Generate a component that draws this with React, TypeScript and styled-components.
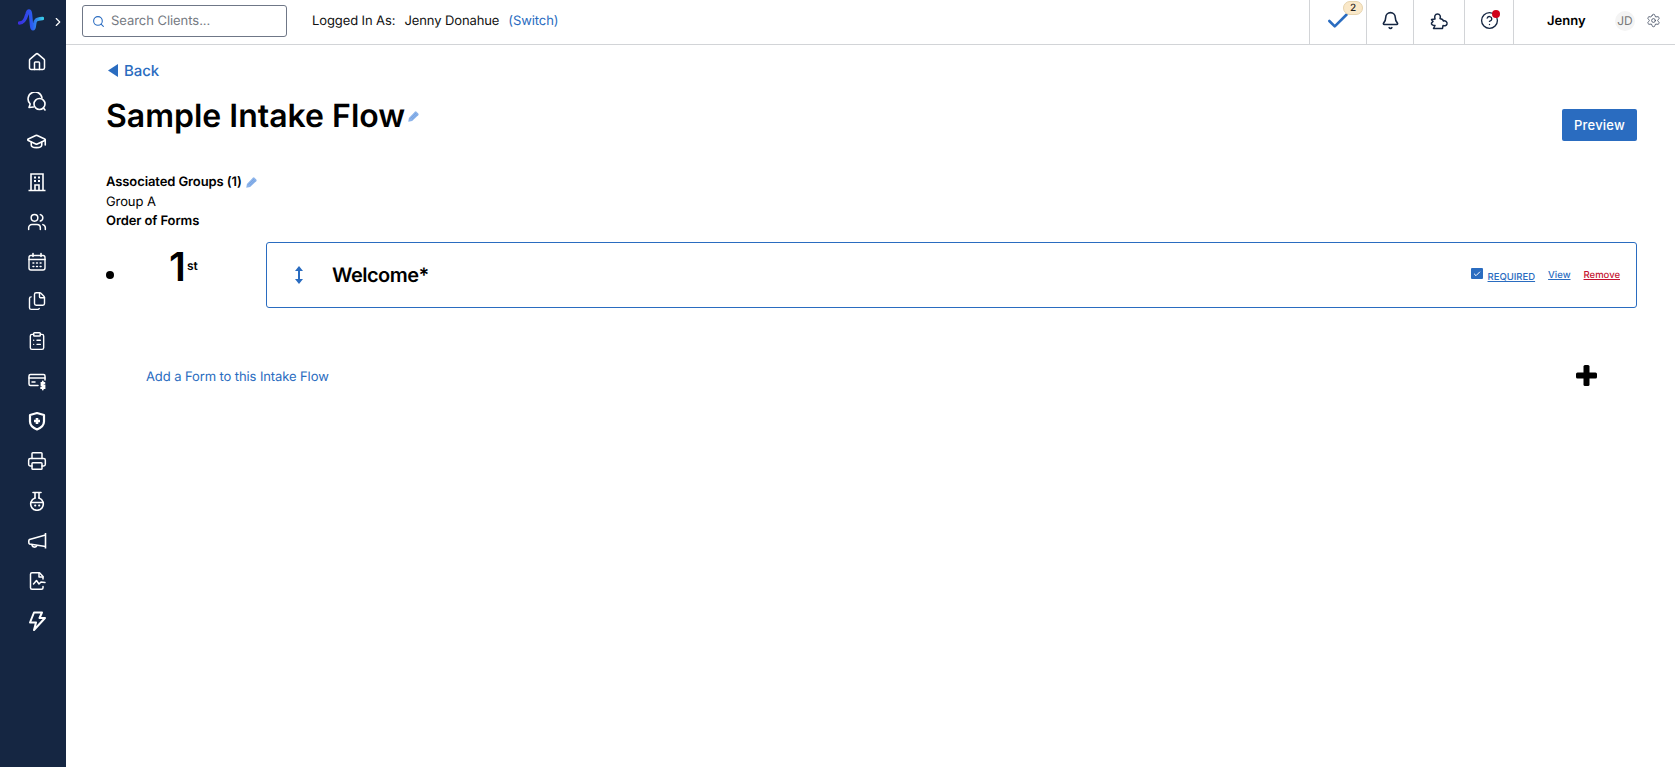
import React from 'react';
import styled, { createGlobalStyle } from 'styled-components';
import { Bell, Check, ChevronRight, CircleHelp, Files, GraduationCap, House, Printer, Search, Settings, Users, ClipboardList } from 'lucide-react';

const GlobalStyle = createGlobalStyle`
    html, body {
        margin: 0;
        padding: 0;
        background: #fff;
        font-family: Inter, "Liberation Sans", sans-serif;
        color: #000;
        text-rendering: geometricPrecision;
        -webkit-font-smoothing: antialiased;
    }
`;

const Page = styled.div`
    display: flex;
    width: 100%;
    height: 767px;
    overflow: hidden;
`;

const Sidebar = styled.nav`
    width: 66px;
    flex: none;
    background: #152642;
    display: flex;
    flex-direction: column;
    align-items: center;
`;

const LogoRow = styled.div`
    height: 44px;
    width: 100%;
    position: relative;
    flex: none;
    display: flex;
    align-items: center;
    padding: 0 0 4px 18px;
    box-sizing: border-box;
`;

const Expand = styled.span`
    position: absolute;
    left: 51px;
    top: 15px;
    color: #fff;
    display: flex;
`;

const NavList = styled.div`
    display: flex;
    flex-direction: column;
    margin-top: -2px;
`;

const NavItem = styled.div`
    width: 66px;
    height: 39.93px;
    box-sizing: border-box;
    padding-left: 7px;
    display: flex;
    align-items: center;
    justify-content: center;
    color: #fff;
`;

const Main = styled.div`
    flex: 1;
    min-width: 0;
    display: flex;
    flex-direction: column;
`;

const TopBar = styled.header`
    height: 45px;
    box-sizing: border-box;
    flex: none;
    border-bottom: 1px solid #d2d4d7;
    display: flex;
    align-items: center;
    padding-left: 16px;
`;

const SearchBox = styled.div`
    width: 205px;
    height: 32px;
    margin-top: -2px;
    box-sizing: border-box;
    border: 1px solid #6f7787;
    border-radius: 3px;
    display: flex;
    align-items: center;
    gap: 6px;
    padding-left: 9px;
    font-size: 13px;
    color: #757a82;
    letter-spacing: -0.05px;
`;

const Logged = styled.div`
    margin-left: 25px;
    margin-top: -2px;
    font-size: 13px;
    letter-spacing: -0.1px;
    display: flex;
    color: #111;
`;

const LoggedName = styled.span`
    margin-left: 9px;
`;

const SwitchLink = styled.span`
    margin-left: 9px;
    color: #2a6cc0;
`;

const TopRight = styled.div`
    margin-left: auto;
    display: flex;
    height: 100%;
`;

const TopCell = styled.div<{ $w: number }>`
    width: ${(p) => p.$w}px;
    height: 100%;
    box-sizing: border-box;
    border-left: 1px solid #d2d4d7;
    padding-bottom: 3px;
    display: flex;
    align-items: center;
    justify-content: center;
    position: relative;
    color: #152642;
`;

const CountBadge = styled.span`
    position: absolute;
    top: 1px;
    left: 33px;
    width: 20px;
    height: 14px;
    border-radius: 7px;
    background: #fae8c8;
    border: 1px solid #e6d3ae;
    box-sizing: border-box;
    font-size: 10px;
    font-weight: 500;
    line-height: 12px;
    text-align: center;
    color: #222;
`;

const RedDot = styled.span`
    position: absolute;
    top: 10px;
    left: 27px;
    width: 8px;
    height: 8px;
    border-radius: 50%;
    background: #d0021b;
`;

const UserCell = styled.div`
    width: 162px;
    height: 100%;
    box-sizing: border-box;
    border-left: 1px solid #d2d4d7;
    padding-bottom: 3px;
    display: flex;
    align-items: center;
    padding-left: 33px;
    color: #4a5568;
`;

const UserName = styled.span`
    font-size: 13px;
    font-weight: 600;
    color: #000;
    width: 68px;
`;

const Avatar = styled.span`
    width: 20px;
    height: 20px;
    border-radius: 50%;
    background: #f4f4f4;
    color: #777;
    font-size: 12px;
    display: flex;
    align-items: center;
    justify-content: center;
    margin-right: 11px;
`;

const Content = styled.main`
    padding: 0 38px 0 40px;
    display: flex;
    flex-direction: column;
`;

const BackLink = styled.div`
    margin: 16px 0 0 2px;
    height: 19px;
    display: flex;
    align-items: center;
    gap: 6px;
    color: #2a6cc0;
    font-size: 15px;
    font-weight: 500;
    letter-spacing: -0.1px;
`;

const TitleRow = styled.div`
    margin-top: 14px;
    display: flex;
    justify-content: space-between;
    align-items: flex-start;
`;

const Title = styled.h1`
    margin: 0;
    font-size: 32px;
    line-height: 44px;
    font-weight: 600;
    display: flex;
    align-items: center;
    gap: 3px;
`;

const PreviewButton = styled.button`
    margin-top: 15px;
    width: 75px;
    height: 32px;
    border: none;
    border-radius: 2px;
    background: #2a6cc0;
    color: #fff;
    font-family: inherit;
    font-size: 13px;
    font-weight: 500;
    letter-spacing: 0.2px;
`;

const Meta = styled.div`
    margin-top: 32px;
    font-size: 13px;
    line-height: 19.5px;
    letter-spacing: -0.1px;
`;

const MetaHead = styled.div`
    font-weight: 600;
    display: flex;
    align-items: center;
    gap: 4px;
`;

const FlowRow = styled.div`
    margin-top: 10px;
    display: flex;
    align-items: stretch;
`;

const Bullet = styled.span`
    width: 8px;
    height: 8px;
    border-radius: 50%;
    background: #000;
    margin-top: 29px;
    flex: none;
`;

const Ordinal = styled.div`
    width: 152px;
    flex: none;
    padding: 2px 0 0 55px;
    box-sizing: border-box;
    display: flex;
    align-items: flex-start;
    font-weight: 600;
`;

const OrdinalNumber = styled.span`
    font-size: 40px;
    line-height: 46px;
`;

const OrdinalSuffix = styled.span`
    font-size: 12px;
    line-height: 14px;
    margin-top: 15px;
    margin-left: 1px;
`;

const FormCard = styled.div`
    flex: 1;
    height: 66px;
    box-sizing: border-box;
    border: 1px solid #2a6cc0;
    border-radius: 3px;
    display: flex;
    align-items: center;
    padding: 0 16px 0 27px;
`;

const DragIcon = styled.span`
    color: #2a6cc0;
    display: flex;
    width: 38px;
`;

const FormName = styled.span`
    font-size: 20px;
    font-weight: 600;
    letter-spacing: -0.5px;
`;

const Actions = styled.div`
    margin-left: auto;
    display: flex;
    align-items: center;
    gap: 13px;
`;

const RequiredWrap = styled.label`
    display: flex;
    align-items: flex-start;
    gap: 5px;
`;

const CheckBox = styled.span`
    width: 12px;
    height: 11px;
    margin-top: -1px;
    border-radius: 1px;
    background: #2a6cc0;
    color: #fff;
    display: flex;
    align-items: center;
    justify-content: center;
`;

const ActionLink = styled.span<{ $danger?: boolean; $drop?: boolean }>`
    font-size: 9.5px;
    font-weight: 500;
    text-decoration: underline;
    color: ${(p) => (p.$danger ? '#c4122f' : '#2a6cc0')};
    position: relative;
    top: ${(p) => (p.$drop ? '3px' : '1px')};
`;

const AddRow = styled.div`
    margin-top: 61px;
    padding: 0 40px 0 40px;
    display: flex;
    align-items: center;
    justify-content: space-between;
`;

const AddLink = styled.span`
    font-size: 13px;
    letter-spacing: -0.1px;
    color: #2a6cc0;
`;

const PlusWrap = styled.span`
    display: flex;
    margin-top: -4px;
`;

const Logo = () => (
    <svg width="26" height="22" viewBox="0 0 26 22" fill="none">
        <defs>
            <linearGradient id="logoGrad" x1="0" x2="1" y1="0" y2="0">
                <stop offset="0" stopColor="#3b2fe0" />
                <stop offset="0.55" stopColor="#2b5cf0" />
                <stop offset="1" stopColor="#38c8e8" />
            </linearGradient>
        </defs>
        <path d="M1.5 14 C5 14 7 12 9 5 C10 1 12 1 12.5 5 L13.5 16 C14 21 16 21 16.5 16 C17 11 18 10 24.5 9.5" stroke="url(#logoGrad)" strokeWidth="3.4" strokeLinecap="round" />
    </svg>
);

const Chats = () => (
    <svg width="20" height="20" viewBox="0 0 20 20" fill="none" stroke="currentColor" strokeWidth="1.6" strokeLinecap="round" strokeLinejoin="round">
        <path d="M6.5 15 L2 15.5 L3.2 12 A7 7 0 1 1 15 6" />
        <circle cx="12.5" cy="12" r="5.5" />
        <path d="M16.5 16 L18 18" />
    </svg>
);

const BuildingIcon = () => (
    <svg width="20" height="20" viewBox="0 0 20 20" fill="none" stroke="currentColor" strokeWidth="1.6">
        <path d="M4 18.5 V2 H16 V18.5 M1.5 18.5 H18.5" />
        <path d="M7 5.5 H9 M11 5.5 H13 M7 9 H9 M11 9 H13" strokeWidth="2" />
        <path d="M8 18.5 V13 H12 V18.5" />
    </svg>
);

const CalendarGrid = () => (
    <svg width="20" height="20" viewBox="0 0 20 20" fill="none" stroke="currentColor" strokeWidth="1.4" strokeLinecap="round">
        <rect x="2" y="3.5" width="16" height="14.5" rx="2" />
        <path d="M2 7.5 H18 M6 1.5 V4.5 M14 1.5 V4.5" strokeWidth="1.6" />
        <path d="M6 11 H6.8 M9.6 11 H10.4 M13.2 11 H14 M6 14.5 H6.8 M9.6 14.5 H10.4 M13.2 14.5 H14" strokeWidth="1.6" />
    </svg>
);

const CardDollar = () => (
    <svg width="20" height="20" viewBox="0 0 20 20" fill="none" stroke="currentColor" strokeWidth="1.5" strokeLinecap="round">
        <path d="M11 14.5 H3.5 A1.5 1.5 0 0 1 2 13 V5 A1.5 1.5 0 0 1 3.5 3.5 H16.5 A1.5 1.5 0 0 1 18 5 V9" />
        <path d="M2 7 H18 M5 11 H8" />
        <path d="M17.5 12 H14.5 V14.5 H17.5 V17 H14 M15.8 10.5 V18.5" strokeWidth="1.8" />
    </svg>
);

const ShieldPlus = () => (
    <svg width="20" height="20" viewBox="0 0 20 20" fill="none" stroke="currentColor" strokeWidth="2.2" strokeLinejoin="round">
        <path d="M10 2 L17 4 V10.5 C17 14.5 13.5 17 10 18.5 C6.5 17 3 14.5 3 10.5 V4 Z" />
        <path d="M10 7 V13 M7 10 H13" strokeWidth="2.6" />
    </svg>
);

const Flask = () => (
    <svg width="20" height="20" viewBox="0 0 20 20" fill="none" stroke="currentColor" strokeWidth="1.6" strokeLinecap="round">
        <path d="M6 1.5 H14 M8 1.5 V7 M12 1.5 V7" />
        <path d="M8 7 A6.3 6.3 0 1 0 12 7" />
        <path d="M3.8 11.5 H16.2" />
        <path d="M8 14.5 H8.4 M12 14.5 H12.4" strokeWidth="1.8" />
    </svg>
);

const Horn = () => (
    <svg width="20" height="20" viewBox="0 0 20 20" fill="none" stroke="currentColor" strokeWidth="1.6" strokeLinejoin="round">
        <path d="M18.5 2 V17.5" />
        <path d="M18.5 4 L2.5 8.5 C1.5 9 1.5 12.5 2.5 13 L18.5 15.5" />
        <path d="M5 13.5 C5 16.5 9 17 10 14.5" />
    </svg>
);

const ReportChart = () => (
    <svg width="20" height="20" viewBox="0 0 20 20" fill="none" stroke="currentColor" strokeWidth="1.5" strokeLinecap="round" strokeLinejoin="round">
        <path d="M16 8 V5.5 L12.5 1.8 H5 A1.5 1.5 0 0 0 3.5 3.3 V16.7 A1.5 1.5 0 0 0 5 18.2 H14.5 A1.5 1.5 0 0 0 16 16.7 V15.5" />
        <path d="M12 2 V6 H16" />
        <path d="M6.5 13 L9.5 9.5 L12 13 L14 11 L18 11.5" />
    </svg>
);

const Bolt = () => (
    <svg width="20" height="20" viewBox="0 0 20 20" fill="none" stroke="currentColor" strokeWidth="2" strokeLinejoin="round">
        <path d="M7 1.5 H15 L12.5 7 H18 L7 19 L9 11.5 H3 Z" />
    </svg>
);

const PuzzleIcon = () => (
    <svg width="20" height="20" viewBox="0 0 20 20" fill="none" stroke="currentColor" strokeWidth="1.5" strokeLinejoin="round">
        <path d="M2.5 8.5 L6 8 C5.2 5.5 6 3 8.5 3 C11 3 12 5.5 11 7.5 L13.5 8.5 L14.5 10 C16 9.5 18.5 10.5 18 13 C17.5 15 15 15 14 14.5 L13.5 17.5 H4.5 L6 14.5 C4 14.5 2 13.5 2.5 12 L4 10.5 Z" />
    </svg>
);

const TriangleLeft = () => (
    <svg width="10" height="13" viewBox="0 0 10 13">
        <path d="M10 0 V13 L0 6.5 Z" fill="#2a6cc0" />
    </svg>
);

const UpDown = () => (
    <svg width="10" height="18" viewBox="0 0 10 18" fill="currentColor">
        <path d="M5 0 L9 5 H1 Z M5 18 L1 13 H9 Z" />
        <rect x="4" y="4" width="2" height="10" />
    </svg>
);

const EditPencil = ({ size }: { size: number }) => (
    <svg width={size} height={size} viewBox="0 0 12 12">
        <path d="M0.3 11.7 L1 7.5 L7.5 0.8 A1.3 1.3 0 0 1 9.3 0.8 L11.2 2.7 A1.3 1.3 0 0 1 11.2 4.5 L4.5 11 Z" fill="#8db4ea" />
        <path d="M2.8 8.2 L8.8 2.2 M4.3 9.2 L10.2 3.4" stroke="#5f93dd" strokeWidth="0.6" />
    </svg>
);

const ThickPlus = () => (
    <svg width="21" height="21" viewBox="0 0 21 21" fill="#000">
        <rect x="7.5" y="0" width="6" height="21" rx="1.5" />
        <rect x="0" y="7.5" width="21" height="6" rx="1.5" />
    </svg>
);

const navIcons = [
    <House key="home" size={20} strokeWidth={1.8} />,
    <Chats key="chats" />,
    <GraduationCap key="school" size={21} strokeWidth={1.8} />,
    <BuildingIcon key="building" />,
    <Users key="users" size={20} strokeWidth={1.8} />,
    <CalendarGrid key="calendar" />,
    <Files key="files" size={20} strokeWidth={1.7} />,
    <ClipboardList key="clipboard" size={20} strokeWidth={1.7} />,
    <CardDollar key="billing" />,
    <ShieldPlus key="shield" />,
    <Printer key="printer" size={20} strokeWidth={1.8} />,
    <Flask key="lab" />,
    <Horn key="marketing" />,
    <ReportChart key="reports" />,
    <Bolt key="zap" />,
];

const App = () => (
    <>
        <GlobalStyle />
        <Page>
            <Sidebar>
                <LogoRow>
                    <Logo />
                    <Expand><ChevronRight size={14} strokeWidth={2} /></Expand>
                </LogoRow>
                <NavList>
                    {navIcons.map((icon) => (
                        <NavItem key={icon.key}>{icon}</NavItem>
                    ))}
                </NavList>
            </Sidebar>
            <Main>
                <TopBar>
                    <SearchBox>
                        <Search size={13} color="#2a6cc0" strokeWidth={2} />
                        Search Clients...
                    </SearchBox>
                    <Logged>
                        Logged In As:
                        <LoggedName>Jenny Donahue</LoggedName>
                        <SwitchLink>(Switch)</SwitchLink>
                    </Logged>
                    <TopRight>
                        <TopCell $w={57}>
                            <Check size={26} color="#2a6cc0" strokeWidth={2.4} />
                            <CountBadge>2</CountBadge>
                        </TopCell>
                        <TopCell $w={47}><Bell size={19} strokeWidth={2} /></TopCell>
                        <TopCell $w={51}><PuzzleIcon /></TopCell>
                        <TopCell $w={49}>
                            <CircleHelp size={19} strokeWidth={1.7} />
                            <RedDot />
                        </TopCell>
                        <UserCell>
                            <UserName>Jenny</UserName>
                            <Avatar>JD</Avatar>
                            <Settings size={15} strokeWidth={1.4} />
                        </UserCell>
                    </TopRight>
                </TopBar>
                <Content>
                    <BackLink>
                        <TriangleLeft />
                        Back
                    </BackLink>
                    <TitleRow>
                        <Title>
                            Sample Intake Flow
                            <EditPencil size={11} />
                        </Title>
                        <PreviewButton>Preview</PreviewButton>
                    </TitleRow>
                    <Meta>
                        <MetaHead>
                            Associated Groups (1)
                            <EditPencil size={11} />
                        </MetaHead>
                        <div>Group A</div>
                        <MetaHead>Order of Forms</MetaHead>
                    </Meta>
                    <FlowRow>
                        <Bullet />
                        <Ordinal>
                            <OrdinalNumber>1</OrdinalNumber>
                            <OrdinalSuffix>st</OrdinalSuffix>
                        </Ordinal>
                        <FormCard>
                            <DragIcon><UpDown /></DragIcon>
                            <FormName>Welcome*</FormName>
                            <Actions>
                                <RequiredWrap>
                                    <CheckBox><Check size={8} strokeWidth={3} /></CheckBox>
                                    <ActionLink $drop>REQUIRED</ActionLink>
                                </RequiredWrap>
                                <ActionLink>View</ActionLink>
                                <ActionLink $danger>Remove</ActionLink>
                            </Actions>
                        </FormCard>
                    </FlowRow>
                    <AddRow>
                        <AddLink>Add a Form to this Intake Flow</AddLink>
                        <PlusWrap><ThickPlus /></PlusWrap>
                    </AddRow>
                </Content>
            </Main>
        </Page>
    </>
);

export default App;
